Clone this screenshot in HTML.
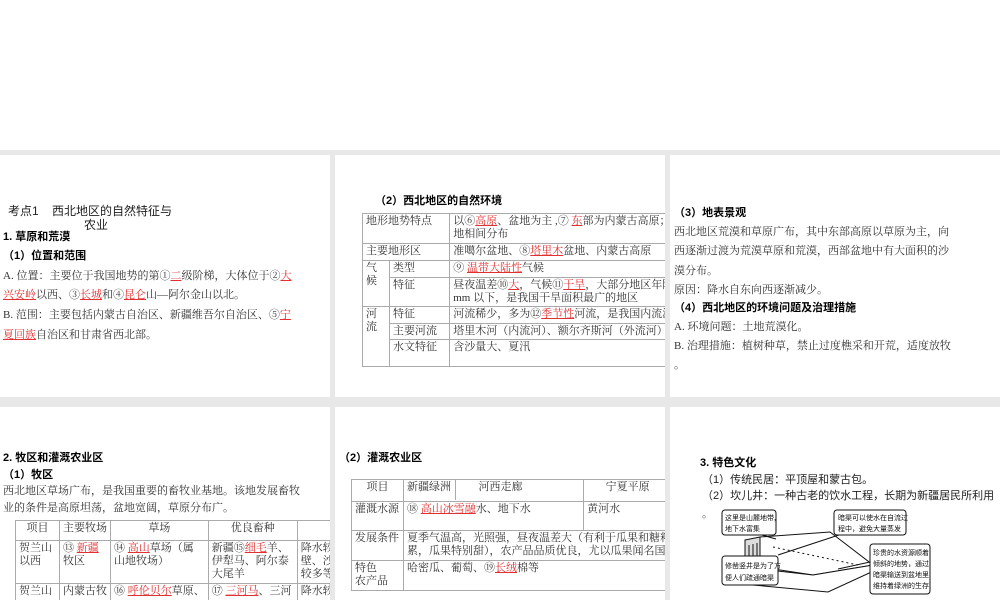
<!DOCTYPE html>
<html><head><meta charset="utf-8"><style>
*{margin:0;padding:0;box-sizing:border-box}
body{width:1000px;height:600px;background:#fff;position:relative;overflow:hidden;font-family:"Liberation Serif","Noto Serif CJK SC",serif;font-size:11px;color:#333}
.g{position:absolute;background:#e8e8e8}
.p{position:absolute;background:#fff;overflow:hidden}
.t{position:absolute;white-space:nowrap;line-height:13px}
.b{font-weight:bold;color:#000;font-family:"Liberation Sans","Noto Sans CJK SC",sans-serif}
.h{font-family:"Liberation Sans","Noto Sans CJK SC",sans-serif;color:#222}
u{color:#e03030;text-decoration:underline}
table{position:absolute;border-collapse:collapse}
td{border:1px solid #aaa;vertical-align:top;padding:1px 3px;line-height:13px;white-space:nowrap;font-size:11px}
</style></head><body>
<div class="g" style="left:0;top:150px;width:1000px;height:450px"></div>
<!-- Row 1 -->
<div class="p" style="left:0;top:155px;width:330px;height:242px">
 <div class="t h" style="left:8px;top:50px;font-size:12px">考点1&nbsp;&nbsp;&nbsp;&nbsp;西北地区的自然特征与</div>
 <div class="t h" style="left:84px;top:64px;font-size:12px">农业</div>
 <div class="t b" style="left:3px;top:76px">1. 草原和荒漠</div>
 <div class="t b" style="left:3px;top:95px">（1）位置和范围</div>
 <div class="t" style="left:3px;top:115px">A. 位置：主要位于我国地势的第①<u>二</u>级阶梯，大体位于②<u>大</u></div>
 <div class="t" style="left:3px;top:134px"><u>兴安岭</u>以西、③<u>长城</u>和④<u>昆仑</u>山—阿尔金山以北。</div>
 <div class="t" style="left:3px;top:154px">B. 范围：主要包括内蒙古自治区、新疆维吾尔自治区、⑤<u>宁</u></div>
 <div class="t" style="left:3px;top:174px"><u>夏回族</u>自治区和甘肃省西北部。</div>
</div>
<div class="p" style="left:335px;top:155px;width:330px;height:242px">
 <div class="t b" style="left:40px;top:40px">（2）西北地区的自然环境</div>
 <table style="left:27px;top:58px;width:320px">
  <tr style="height:30px"><td colspan="2" style="width:86px">地形地势特点</td><td>以⑥<u>高原</u>、盆地为主 ,⑦ <u>东</u>部为内蒙古高原；<br>地相间分布</td></tr>
  <tr style="height:17px"><td colspan="2">主要地形区</td><td>准噶尔盆地、⑧<u>塔里木</u>盆地、内蒙古高原</td></tr>
  <tr style="height:17px"><td rowspan="2" style="width:27px">气<br>候</td><td>类型</td><td>⑨ <u>温带大陆性</u>气候</td></tr>
  <tr style="height:28px"><td>特征</td><td>昼夜温差⑩<u>大</u>，气候⑪<u>干旱</u>，大部分地区年降<br>mm 以下，是我国干旱面积最广的地区</td></tr>
  <tr style="height:17px"><td rowspan="3">河<br>流</td><td>特征</td><td>河流稀少，多为⑫<u>季节性</u>河流，是我国内流河</td></tr>
  <tr style="height:16px"><td>主要河流</td><td>塔里木河（内流河）、额尔齐斯河（外流河）</td></tr>
  <tr style="height:27px"><td>水文特征</td><td>含沙量大、夏汛</td></tr>
 </table>
</div>
<div class="p" style="left:670px;top:155px;width:330px;height:242px">
 <div class="t b" style="left:4px;top:52px">（3）地表景观</div>
 <div class="t" style="left:4px;top:71px">西北地区荒漠和草原广布，其中东部高原以草原为主，向</div>
 <div class="t" style="left:4px;top:90px">西逐渐过渡为荒漠草原和荒漠，西部盆地中有大面积的沙</div>
 <div class="t" style="left:4px;top:110px">漠分布。</div>
 <div class="t" style="left:4px;top:129px">原因：降水自东向西逐渐减少。</div>
 <div class="t b" style="left:4px;top:147px">（4）西北地区的环境问题及治理措施</div>
 <div class="t" style="left:4px;top:166px">A. 环境问题：土地荒漠化。</div>
 <div class="t" style="left:4px;top:185px">B. 治理措施：植树种草，禁止过度樵采和开荒，适度放牧</div>
 <div class="t" style="left:4px;top:204px">。</div>
</div>
<!-- Row 2 -->
<div class="p" style="left:0;top:407px;width:330px;height:193px">
 <div class="t b" style="left:3px;top:45px">2. 牧区和灌溉农业区</div>
 <div class="t b" style="left:3px;top:62px">（1）牧区</div>
 <div class="t" style="left:3px;top:78px">西北地区草场广布，是我国重要的畜牧业基地。该地发展畜牧</div>
 <div class="t" style="left:3px;top:95px">业的条件是高原坦荡，盆地宽阔，草原分布广。</div>
 <table style="left:15px;top:113px;width:330px">
  <tr style="height:20px"><td style="width:44px;text-align:center">项目</td><td style="width:51px">主要牧场</td><td style="width:97px;text-align:center">草场</td><td style="width:89px;text-align:center">优良畜种</td><td></td></tr>
  <tr style="height:43px"><td>贺兰山<br>以西</td><td>⑬ <u>新疆</u><br>牧区</td><td>⑭ <u>高山</u>草场（属<br>山地牧场）</td><td>新疆⑮<u>细毛</u>羊、<br>伊犁马、阿尔泰<br>大尾羊</td><td>降水较<br>壁、沙<br>较多等</td></tr>
  <tr style="height:20px"><td>贺兰山</td><td>内蒙古牧</td><td>⑯ <u>呼伦贝尔</u>草原、</td><td>⑰ <u>三河马</u>、三河</td><td>降水较</td></tr>
 </table>
</div>
<div class="p" style="left:335px;top:407px;width:330px;height:193px">
 <div class="t b" style="left:4px;top:45px">（2）灌溉农业区</div>
 <table style="left:16px;top:72px;width:330px">
  <tr style="height:22px"><td style="width:52px;text-align:center">项目</td><td colspan="2" style="padding:0"><div style="display:flex"><div style="width:52px;border-right:1px solid #aaa;padding:1px 3px;height:20px">新疆绿洲</div><div style="width:89px;text-align:center;padding:1px">河西走廊</div></div></td><td style="width:88px;text-align:center">宁夏平原</td><td></td></tr>
  <tr style="height:29px"><td>灌溉水源</td><td colspan="2">⑱ <u>高山冰雪融</u>水、地下水</td><td colspan="2">黄河水</td></tr>
  <tr style="height:30px"><td>发展条件</td><td colspan="4">夏季气温高，光照强，昼夜温差大（有利于瓜果和糖料<br>累，瓜果特别甜），农产品品质优良，尤以瓜果闻名国</td></tr>
  <tr style="height:30px"><td>特色<br>农产品</td><td colspan="4">哈密瓜、葡萄、⑲<u>长绒</u>棉等</td></tr>
 </table>
</div>
<div class="p" style="left:670px;top:407px;width:330px;height:193px">
 <div class="t h" style="left:30px;top:50px;font-size:11px;font-weight:bold;color:#000">3. 特色文化</div>
 <div class="t h" style="left:32px;top:67px">（1）传统民居：平顶屋和蒙古包。</div>
 <div class="t h" style="left:32px;top:83px">（2）坎儿井：一种古老的饮水工程，长期为新疆居民所利用</div>
 <div class="t" style="left:32px;top:101px">。</div>
 <svg style="position:absolute;left:48px;top:100px" width="215" height="93" viewBox="0 0 215 93">
  <g fill="#fff" stroke="#111" stroke-width="1">
   <polygon points="42,30 112,25 155,58 95,68 42,60"/>
   <polygon points="27,33 42,30 42,62 27,68" fill="#ddd"/>
   <polygon points="27,68 42,62 95,68 155,58 160,62 110,85 35,78"/>
   <line x1="31" y1="38" x2="31" y2="64"/><line x1="35" y1="37" x2="35" y2="63"/><line x1="39" y1="36" x2="39" y2="62"/>
   <line x1="55" y1="40" x2="140" y2="58" stroke-dasharray="2 3"/>
   <line x1="58" y1="32" x2="8" y2="18"/><line x1="60" y1="48" x2="130" y2="25"/><line x1="60" y1="58" x2="30" y2="62"/><line x1="120" y1="62" x2="152" y2="55"/>
   <rect x="4" y="3" width="54" height="25" rx="3"/>
   <rect x="116" y="3" width="72" height="25" rx="3"/>
   <rect x="4" y="49" width="56" height="29" rx="3"/>
   <rect x="152" y="37" width="60" height="50" rx="3"/>
  </g>
  <g font-size="7" fill="#111" font-family="Noto Sans CJK SC,sans-serif">
   <text x="7" y="13">这里是山麓地带,</text><text x="7" y="24">地下水富集</text>
   <text x="120" y="13">暗渠可以使水在自流过</text><text x="120" y="24">程中，避免大量蒸发</text>
   <text x="7" y="61">修凿竖井是为了方</text><text x="7" y="73">便人们疏通暗渠</text>
   <text x="155" y="48">珍贵的水资源顺着</text><text x="155" y="59">倾斜的地势，通过</text><text x="155" y="70">暗渠输送到盆地里,</text><text x="155" y="81">维持着绿洲的生存</text>
  </g>
 </svg>
</div>
</body></html>
